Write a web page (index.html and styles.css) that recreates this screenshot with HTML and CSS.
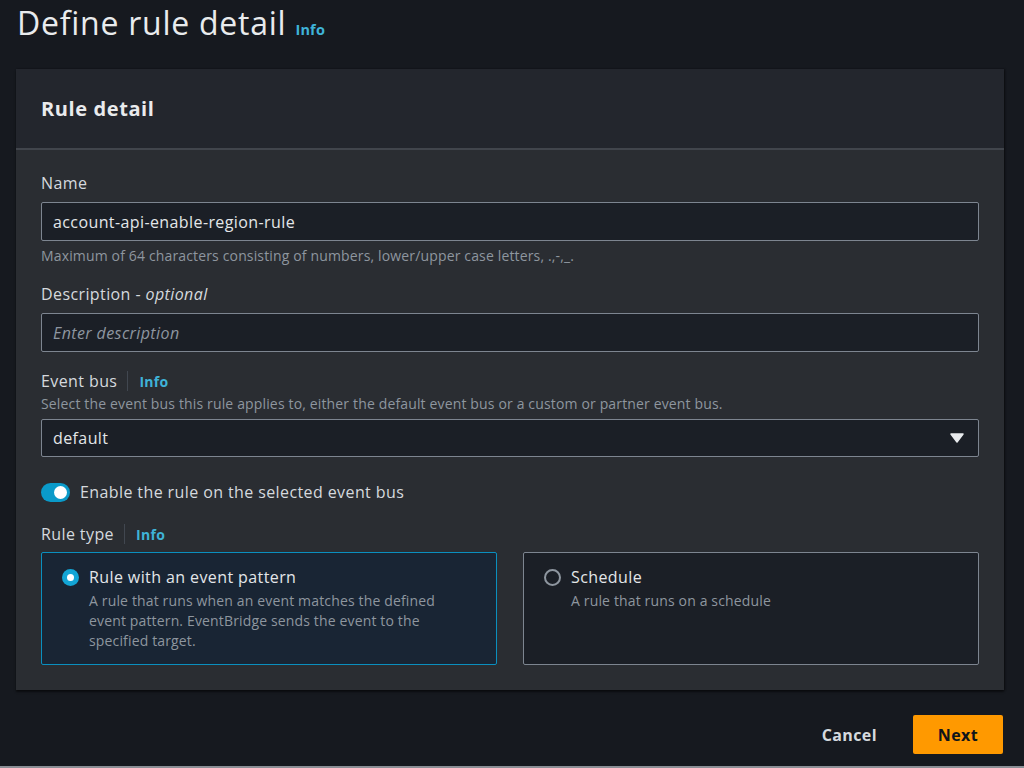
FILE: index.html
```html
<!DOCTYPE html>
<html>
<head>
<meta charset="utf-8">
<link rel="stylesheet" href="styles.css">
</head>
<body>
<div class="page">
  <div class="title-row">
    <h1 class="title">Define rule detail</h1>
    <a class="info info-title">Info</a>
  </div>

  <section class="panel">
    <div class="panel-header">
      <h2 class="panel-title">Rule detail</h2>
    </div>
    <div class="panel-body">
      <div class="field">
        <label class="label">Name</label>
        <div class="input">account-api-enable-region-rule</div>
        <div class="hint hint-below">Maximum of 64 characters consisting of numbers, lower/upper case letters, .,-,_.</div>
      </div>

      <div class="field field-desc">
        <label class="label">Description - <em>optional</em></label>
        <div class="input placeholder">Enter description</div>
      </div>

      <div class="field field-bus">
        <div class="label-row">
          <label class="label">Event bus</label>
          <span class="sep"></span>
          <a class="info">Info</a>
        </div>
        <div class="hint hint-above">Select the event bus this rule applies to, either the default event bus or a custom or partner event bus.</div>
        <div class="input select">
          <span>default</span>
          <svg class="caret" width="14" height="10" viewBox="0 0 14 10"><path d="M1 1h12L7 9z" fill="#e9ebed" stroke="#e9ebed" stroke-width="1.5" stroke-linejoin="round"/></svg>
        </div>
      </div>

      <div class="toggle-row">
        <span class="toggle"><span class="knob"></span></span>
        <span class="toggle-label">Enable the rule on the selected event bus</span>
      </div>

      <div class="field field-type">
        <div class="label-row">
          <label class="label">Rule type</label>
          <span class="sep"></span>
          <a class="info">Info</a>
        </div>
        <div class="tiles">
          <div class="tile tile-selected">
            <span class="radio radio-on"></span>
            <div class="tile-text">
              <div class="tile-title">Rule with an event pattern</div>
              <div class="tile-desc">A rule that runs when an event matches the defined event pattern. EventBridge sends the event to the specified target.</div>
            </div>
          </div>
          <div class="tile">
            <span class="radio"></span>
            <div class="tile-text">
              <div class="tile-title">Schedule</div>
              <div class="tile-desc">A rule that runs on a schedule</div>
            </div>
          </div>
        </div>
      </div>
    </div>
  </section>

  <div class="actions">
    <button class="btn btn-link">Cancel</button>
    <button class="btn btn-primary">Next</button>
  </div>
  <div class="bottom-edge"></div>
</div>
</body>
</html>
```

FILE: styles.css
```css
* { box-sizing: border-box; }
html, body {
  margin: 0;
  padding: 0;
  background: #16191f;
}
body {
  font-family: "Open Sans", "Noto Sans", "Liberation Sans", sans-serif;
  color: #d1d5db;
  width: 1024px;
  height: 768px;
  overflow: hidden;
  letter-spacing: 0.4px;
}
.page {
  display: flex;
  flex-direction: column;
  height: 768px;
}
.title-row {
  display: flex;
  align-items: baseline;
  padding: 3px 0 0 17px;
  margin-bottom: 26px;
  height: 43px;
}
.title {
  margin: 0;
  font-size: 32px;
  line-height: 40px;
  font-weight: 400;
  color: #e9ebed;
  letter-spacing: 0.75px;
}
.info {
  color: #3fb3d8;
  font-weight: 700;
  font-size: 14px;
  letter-spacing: 0.3px;
  text-decoration: none;
}
.info-title {
  margin-left: 9px;
  font-size: 14.5px;
  letter-spacing: 0.2px;
}
.panel {
  margin: 0 20px 0 16px;
  background: #2a2d32;
  box-shadow: 0 2px 2px rgba(0,0,0,0.5), 1px 0 2px rgba(0,0,0,0.4);
}
.panel-header {
  height: 81px;
  background: #23262d;
  border-bottom: 2px solid #41454c;
  display: flex;
  align-items: center;
  padding: 0 25px;
}
.panel-title {
  margin: 0;
  font-size: 20px;
  font-weight: 700;
  color: #e9ebed;
  letter-spacing: 0.6px;
}
.panel-body {
  padding: 22px 25px 25px 25px;
}
.field { display: flex; flex-direction: column; }
.label {
  font-size: 16px;
  line-height: 22px;
  color: #d5d9de;
}
.label em { font-style: italic; }
.input {
  margin-top: 8px;
  height: 39px;
  background: #1b1f26;
  border: 1px solid #7d8590;
  border-radius: 2px;
  padding: 0 11px;
  display: flex;
  align-items: center;
  font-size: 16px;
  color: #e3e6e9;
}
.placeholder {
  font-style: italic;
  color: #8e96a0;
}
.hint {
  font-size: 14px;
  line-height: 20px;
  color: #8e969f;
  letter-spacing: 0.15px;
}
.hint-below { margin-top: 5px; }
.field-desc { margin-top: 17px; }
.field-bus { margin-top: 18px; }
.label-row {
  display: flex;
  align-items: center;
  height: 22px;
}
.sep {
  width: 1px;
  height: 20px;
  background: #414750;
  margin: 0 11px 0 10px;
}
.hint-above { margin-top: 2px; }
.select {
  margin-top: 5px;
  height: 38px;
  justify-content: space-between;
  padding-right: 14px;
}
.toggle-row {
  display: flex;
  align-items: center;
  margin-top: 25px;
  height: 20px;
}
.toggle {
  width: 29px;
  height: 19px;
  border-radius: 10px;
  background: #0a9ac9;
  position: relative;
  display: inline-block;
}
.knob {
  position: absolute;
  width: 13px;
  height: 13px;
  border-radius: 50%;
  background: #ffffff;
  top: 3px;
  right: 3px;
}
.toggle-label {
  margin-left: 10px;
  font-size: 16px;
  color: #d5d9de;
}
.field-type { margin-top: 21px; }
.tiles {
  margin-top: 7px;
  display: grid;
  grid-template-columns: 1fr 1fr;
  gap: 26px;
}
.tile {
  height: 113px;
  border: 1px solid #7d8590;
  border-radius: 2px;
  background: #1b1f26;
  display: flex;
  align-items: flex-start;
  padding: 13px 20px 0 20px;
}
.tile-selected {
  background: #192534;
  border-color: #0a8fbf;
}
.radio {
  flex: none;
  width: 17px;
  height: 17px;
  border-radius: 50%;
  border: 2px solid #8e969f;
  margin-top: 3px;
  position: relative;
}
.radio-on {
  border: none;
  background: #13a5d5;
}
.radio-on::after {
  content: "";
  position: absolute;
  width: 7px;
  height: 7px;
  border-radius: 50%;
  background: #ffffff;
  top: 5px;
  left: 5px;
}
.tile-text {
  margin-left: 10px;
}
.tile-title {
  font-size: 16px;
  line-height: 22px;
  color: #e3e6e9;
}
.tile-desc {
  margin-top: 3px;
  font-size: 14px;
  line-height: 20px;
  color: #8e969f;
  letter-spacing: 0.15px;
  max-width: 372px;
}
.actions {
  margin-top: 25px;
  display: flex;
  justify-content: flex-end;
  align-items: center;
  padding-right: 21px;
  height: 39px;
}
.btn {
  font-family: inherit;
  font-size: 16px;
  font-weight: 700;
  letter-spacing: 0.4px;
  border: none;
  cursor: pointer;
}
.btn-link {
  background: transparent;
  color: #d5d9de;
  margin-right: 30px;
}
.btn-primary {
  background: #ff9900;
  color: #0f141a;
  width: 90px;
  height: 39px;
  border-radius: 2px;
}
.bottom-edge {
  margin-top: auto;
  height: 2px;
  background: #8b8f96;
}
```
